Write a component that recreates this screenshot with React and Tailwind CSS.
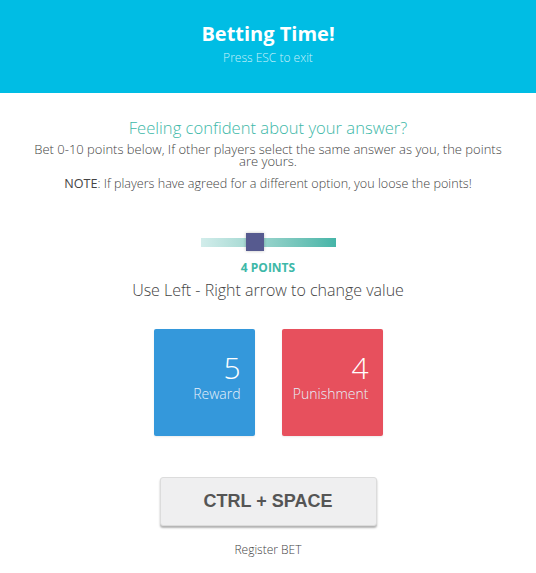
import React, { useState } from "react";

const Header = () => {
  return (
    <div className="bg-[#00bde4] h-[93px] flex flex-col items-center pt-[20px] text-white font-['Open_Sans',sans-serif]">
      <div className="text-[20px] font-bold leading-[28px]">Betting Time!</div>
      <div className="text-[12px] font-light leading-[16px] mt-[2px] text-[#c9f1fb]">
        Press ESC to exit
      </div>
    </div>
  );
};

const Slider = ({ value }) => {
  return (
    <div className="flex justify-center mt-[46px]">
      <div className="relative w-[135px] h-[9px] bg-gradient-to-r from-[#d2edeb] to-[#45b5a8]">
        <div
          style={{ left: `${value * 11 + 1}px` }}
          className="absolute top-[-5px] w-[18px] h-[18px] bg-[#565a8f] shadow-[0_0_3px_rgba(0,0,0,0.25)]"
        ></div>
      </div>
    </div>
  );
};

const Card = ({ value, label, color }) => {
  return (
    <div className={`w-[101px] h-[107px] rounded-[2px] ${color} flex flex-col items-end pr-[14px] pt-[21px] text-white font-['Open_Sans',sans-serif] font-light shadow-[0_1px_2px_rgba(0,0,0,0.08)]`}>
      <div className="text-[30px] leading-[36px]">{value}</div>
      <div className="text-[14px] leading-[16px] text-[#e6f0fa]">{label}</div>
    </div>
  );
};

export default function App() {
  const [points] = useState(4);

  return (
    <div className="w-[536px] h-[573px] bg-white">
      <Header />
      <div className="flex flex-col items-center text-center font-['Open_Sans',sans-serif]">
        <div className="mt-[25px] text-[16.6px] font-light leading-[20px] text-[#3db8a8]">
          Feeling confident about your answer?
        </div>
        <div className="mt-[5px] w-[476px] text-[13px] font-light leading-[12px] text-[#444]">
          Bet 0-10 points below, If other players select the same answer as you, the points are yours.
        </div>
        <div className="mt-[9px] text-[12.6px] font-light leading-[16px] text-[#444]">
          <span className="font-normal">NOTE</span>: If players have agreed for a different option, you loose the points!
        </div>
      </div>
      <Slider value={points} />
      <div className="flex flex-col items-center font-['Open_Sans',sans-serif]">
        <div className="mt-[13px] text-[12px] font-bold leading-[16px] text-[#3db8a8]">
          {points} POINTS
        </div>
        <div className="mt-[4px] text-[16px] font-light leading-[20px] text-[#444]">
          Use Left - Right arrow to change value
        </div>
      </div>
      <div className="flex justify-center gap-[27px] mt-[29px]">
        <Card value={5} label="Reward" color="bg-[#3498db]" />
        <Card value={points} label="Punishment" color="bg-[#e7505d]" />
      </div>
      <div className="flex flex-col items-center mt-[41px]">
        <button className="w-[217px] h-[49px] rounded-[3px] bg-[#efeff0] border border-[#dcdcdc] shadow-[0_2px_2px_rgba(0,0,0,0.3)] text-[18px] font-bold text-[#555] font-['Liberation_Sans',Arial,sans-serif]">
          CTRL + SPACE
        </button>
        <div className="mt-[16px] text-[12px] font-light leading-[16px] text-[#444] font-['Open_Sans',sans-serif]">
          Register BET
        </div>
      </div>
    </div>
  );
}
